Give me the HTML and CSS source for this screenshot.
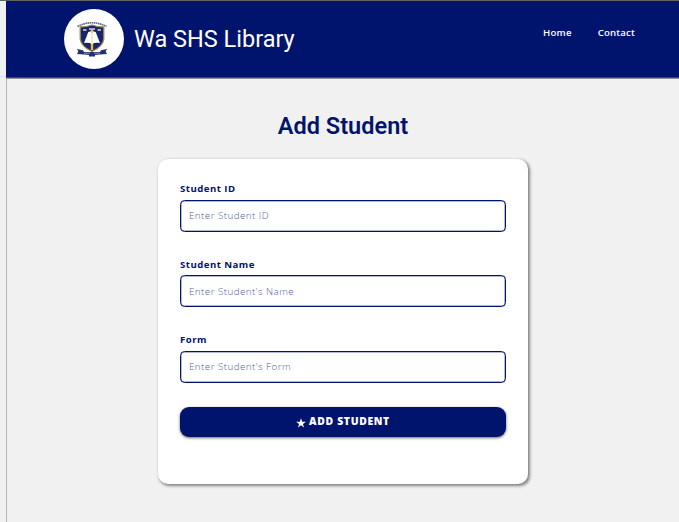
FILE: index.html
```html
<!DOCTYPE html>
<html lang="en">
<head>
<meta charset="utf-8">
<title>Wa SHS Library</title>
<link rel="stylesheet" href="styles.css">
</head>
<body>
<div class="gutter"><div class="gutter-top"></div><div class="gutter-rest"></div></div>
<div class="page">
  <header class="header">
    <div class="brand">
      <div class="logo">
        <svg width="32" height="36" viewBox="0 0 32 36">
          <path d="M1.500 5.500Q16-2 30.500 5.500" fill="none" stroke="#626a98" stroke-width="1.700" stroke-dasharray="1.6 .5"/>
          <path d="M4.200 6Q11 6 16 4Q21 6 27.800 6V18Q27 25.500 16 30.500Q5 25.500 4.200 18Z" fill="#18256d" stroke="#a18d50" stroke-width="1.300"/>
          <path d="M7 9h3.500M21.500 9h3.500M13 8h6" stroke="#d5d8e7" stroke-width="1.700"/>
          <path d="M16 9v20" stroke="#e8bd36" stroke-width="2.400"/>
          <path d="M12.300 11L16 10l3.700 1L24 22Q19 21 16 23Q13 21 8 22Z" fill="#fff"/>
          <path d="M16 8v4" stroke="#e8bd36" stroke-width="1.600"/>
          <path d="M16 13v9" stroke="#ecd68d" stroke-width="1"/>
          <path d="M1 28l6 1.300 1 1.700h16l1-1.700 6-1.300-1.300 2.500L31 33l-7 .5-5 .5v1.500h-6v-1.500L8 33.500l-7-.5 1.300-2.500Z" fill="#24306f"/>
          <path d="M8 32.200h6M18 32.200h6" stroke="#aab0ca" stroke-width=".8"/>
        </svg>
      </div>
      <span class="brand-name">Wa SHS Library</span>
    </div>
    <nav class="nav"><a>Home</a><a>Contact</a></nav>
  </header>
  <main class="main">
    <h1 class="title">Add Student</h1>
    <form class="card">
      <div class="field"><label for="sid">Student ID</label><input id="sid" placeholder="Enter Student ID"></div>
      <div class="field"><label for="name">Student Name</label><input id="name" placeholder="Enter Student's Name"></div>
      <div class="field"><label for="form">Form</label><input id="form" placeholder="Enter Student's Form"></div>
      <button class="submit" type="button">
        <svg width="10" height="10" viewBox="0 0 10 10"><path d="M5 .2L6.200 3.700H9.900L6.950 5.900 8 9.500 5 7.300 2 9.500 3.050 5.900.1 3.700H3.800Z" fill="#fff"/></svg>
        <span>ADD STUDENT</span>
      </button>
    </form>
  </main>
</div>
</body>
</html>
```

FILE: styles.css
```css
* { box-sizing: border-box; }
body {
  margin: 0;
  height: 522px;
  display: flex;
  overflow: hidden;
  background: #f1f1f1;
  border-top: 1px solid #636363;
  font-family: "Open Sans", sans-serif;
  color: #00146e;
}
.gutter { width: 6px; flex: none; }
.gutter-top { height: 76px; background: #f0f0f0; border-bottom: 1px solid #e2e2e2; }
.gutter-rest { height: 445px; background: #f0f0f0; }
.page { flex: 1; }
.header {
  height: 78px;
  display: flex;
  justify-content: space-between;
  background: #00146e;
  border-bottom: 1px solid #929292;
  box-shadow: inset 0 -1px #45475a;
  padding: 7.500px 44px 0 57.500px;
}
.brand { display: flex; height: 61px; align-items: center; gap: 10px; }
.logo {
  width: 60.5px;
  height: 60.5px;
  border-radius: 50%;
  background: #fff;
  display: flex;
  align-items: center;
  justify-content: center;
}
.logo svg { display: block; margin-right: 3px; }
.brand-name { font: 400 23.5px/30px Roboto, sans-serif; color: #fff; }
.nav { display: flex; gap: 26px; padding-top: 16.500px; font-size: 9.6px; line-height: 15px; font-weight: 600; letter-spacing: .2px; color: #fff; }
.main {
  height: 443px;
  border-left: 1px solid #b4b4b4;
  display: flex;
  flex-direction: column;
  align-items: center;
}
.title { margin: 32px 0 17.500px; font: 600 23.5px/30px Roboto, sans-serif; letter-spacing: .03px; }
.card {
  width: 370px;
  height: 325.500px;
  background: #fff;
  border-radius: 10px;
  padding: 22.800px 22px 0;
  box-shadow: 1.5px 1.500px 3px rgba(0,0,0,.45);
}
.field { height: 75.400px; }
.field label { display: block; height: 18.500px; font-size: 9.6px; line-height: 15px; font-weight: 700; letter-spacing: .48px; }
.field input {
  display: block;
  width: 100%;
  height: 32px;
  border: 1px solid #00146e;
  border-radius: 4.500px;
  background: #fff;
  padding: 0 8px;
  font: 300 9.8px/15px "Open Sans", sans-serif;
  letter-spacing: .45px;
  outline: none;
  box-shadow: inset 0 0 0 .5px rgba(0,20,110,.6);
}
.field input::placeholder { color: #00146e; opacity: .7; }
.submit {
  width: 100%;
  height: 30px;
  display: flex;
  justify-content: center;
  align-items: center;
  gap: 3px;
  border: 0;
  border-radius: 9px;
  background: #00146e;
  color: #fff;
  font: 800 10.4px/15px "Open Sans", sans-serif;
  letter-spacing: .65px;
  padding-bottom: 2px;
  box-shadow: 0 1px 3px rgba(0,0,0,.6);
}
.submit svg { position: relative; top: 1px; }
```
